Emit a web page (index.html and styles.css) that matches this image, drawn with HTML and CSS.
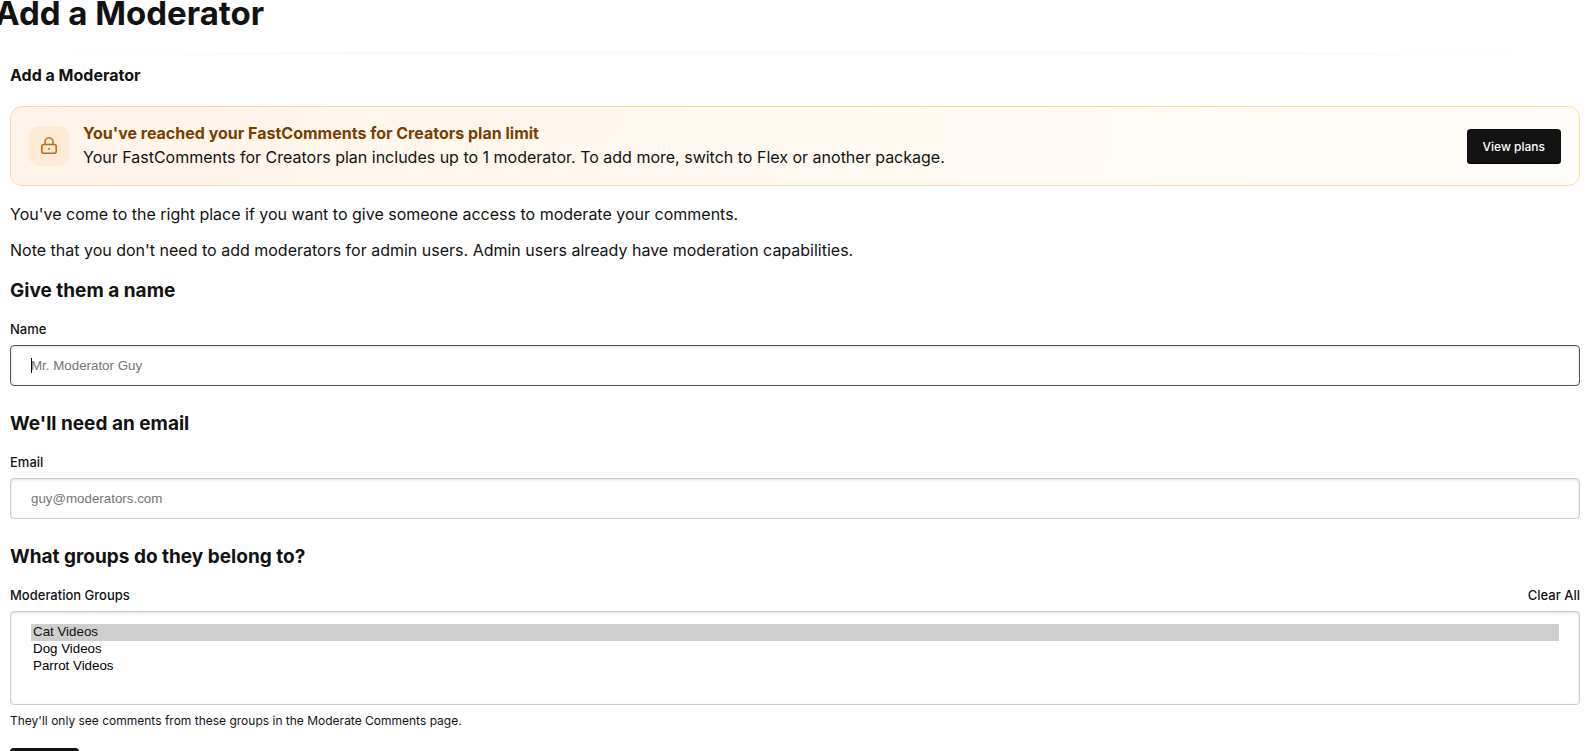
FILE: index.html
```html
<!DOCTYPE html>
<html lang="en">
<head>
<meta charset="utf-8">
<title>Add a Moderator</title>
<link rel="stylesheet" href="styles.css">
</head>
<body>
<header class="page-header">
  <h1 class="page-title">Add a Moderator</h1>
</header>
<main class="content">
  <h2 class="content-title">Add a Moderator</h2>
  <section class="limit">
    <span class="limit-icon">
      <svg width="20" height="20" viewBox="0 0 20 20" fill="none" stroke="currentColor" stroke-width="1.6" aria-hidden="true">
        <path d="M6 8.500V6a4 4.300 0 0 1 8 0V8.500"/>
        <rect x="2.800" y="8.500" width="14.400" height="8.700" rx="2"/>
        <rect x="9.200" y="12" width="1.700" height="1.700" fill="currentColor" stroke="none"/>
      </svg>
    </span>
    <div class="limit-text">
      <strong class="limit-title">You've reached your FastComments for Creators plan limit</strong>
      <span>Your FastComments for Creators plan includes up to 1 moderator. To add more, switch to Flex or another package.</span>
    </div>
    <button class="button" type="button">View plans</button>
  </section>
  <p class="intro">You've come to the right place if you want to give someone access to moderate your comments.</p>
  <p class="intro">Note that you don't need to add moderators for admin users. Admin users already have moderation capabilities.</p>
  <form class="form">
    <section class="group">
      <h3 class="group-title">Give them a name</h3>
      <label class="label" for="name">Name</label>
      <input class="field" id="name" type="text" placeholder="Mr. Moderator Guy" autofocus>
    </section>
    <section class="group">
      <h3 class="group-title">We'll need an email</h3>
      <label class="label" for="email">Email</label>
      <input class="field" id="email" type="email" placeholder="guy@moderators.com">
    </section>
    <section class="group">
      <h3 class="group-title">What groups do they belong to?</h3>
      <div class="label-row">
        <label class="label" for="groups">Moderation Groups</label>
        <a class="label" href="#">Clear All</a>
      </div>
      <select class="field" id="groups" multiple>
        <option class="choice" selected>Cat Videos</option>
        <option class="choice">Dog Videos</option>
        <option class="choice">Parrot Videos</option>
      </select>
      <p class="hint">They'll only see comments from these groups in the Moderate Comments page.</p>
    </section>
    <button class="button button-save" type="submit">Save</button>
  </form>
</main>
</body>
</html>
```
FILE: styles.css
```css
* { box-sizing: border-box; }
html { scrollbar-width: none; }
body {
  margin: 0;
  background: #fff;
  color: #121212;
  font-family: Inter, "Liberation Sans", sans-serif;
  font-size: 16px;
  line-height: 20px;
}
.page-header {
  height: 55px;
  background: radial-gradient(ellipse 50% 6px at 50% 100%, #fafafa, #fafafa 60%, #fff) no-repeat;
}
.page-title {
  margin: 0 -5px;
  font-size: 33px;
  line-height: 26px;
  font-weight: 700;
}
.content { padding: 10px 10px 24px; }
.content-title {
  margin: 0 0 21px;
  font-size: 16px;
  font-weight: 700;
}
.limit {
  display: flex;
  align-items: center;
  gap: 14px;
  margin-bottom: 18px;
  padding: 14px 18px;
  border: 1px solid #ffd8a8;
  border-radius: 12px;
  background: linear-gradient(100deg, #fff4e9, #fffdf9);
}
.limit-icon {
  display: grid;
  place-items: center;
  width: 40px;
  height: 40px;
  border-radius: 10px;
  background: #ffead6;
  color: #c96a0a;
}
.limit-text {
  display: flex;
  flex: 1;
  flex-direction: column;
  padding-bottom: 2px;
  line-height: 24px;
}
.limit-title { color: #7a3e00; font-weight: 700; }
.button {
  height: 35px;
  padding: 0 16px;
  border: 0;
  border-radius: 4px;
  background: #121212;
  color: #fff;
  font: 500 12px Inter, "Liberation Sans", sans-serif;
  box-shadow: inset 0 -1px 2px #000;
}
.intro { margin: 0 0 16px; }
.form { padding-top: 4px; }
.group { margin-bottom: 27px; }
.group-title {
  margin: 0 0 18px;
  font-size: 19px;
  line-height: 22px;
  font-weight: 700;
}
.label {
  display: block;
  margin-bottom: 7px;
  color: inherit;
  font-size: 13px;
  line-height: 18px;
  font-weight: 500;
  text-decoration: none;
}
.label-row { display: flex; justify-content: space-between; }
.field {
  display: block;
  width: 100%;
  padding: 12px 20px;
  border: 1px solid #ccc;
  border-radius: 4px;
  outline: 0;
  background: #fff;
  box-shadow: inset 0 1px 3px #ddd;
  font-family: "Liberation Sans", Arial, sans-serif;
}
.field:focus { border-color: #555; }
/* steady caret while the empty field has focus */
.field:focus:placeholder-shown {
  background: linear-gradient(#000, #000) 20px 50% / 1px 15px no-repeat #fff;
  caret-color: transparent;
}
.choice { padding-bottom: 2px; }
.hint {
  margin: 8px 0 0;
  font-size: 12px;
  line-height: 16px;
}
.button-save { display: block; min-width: 69px; margin-top: -8px; }
```
